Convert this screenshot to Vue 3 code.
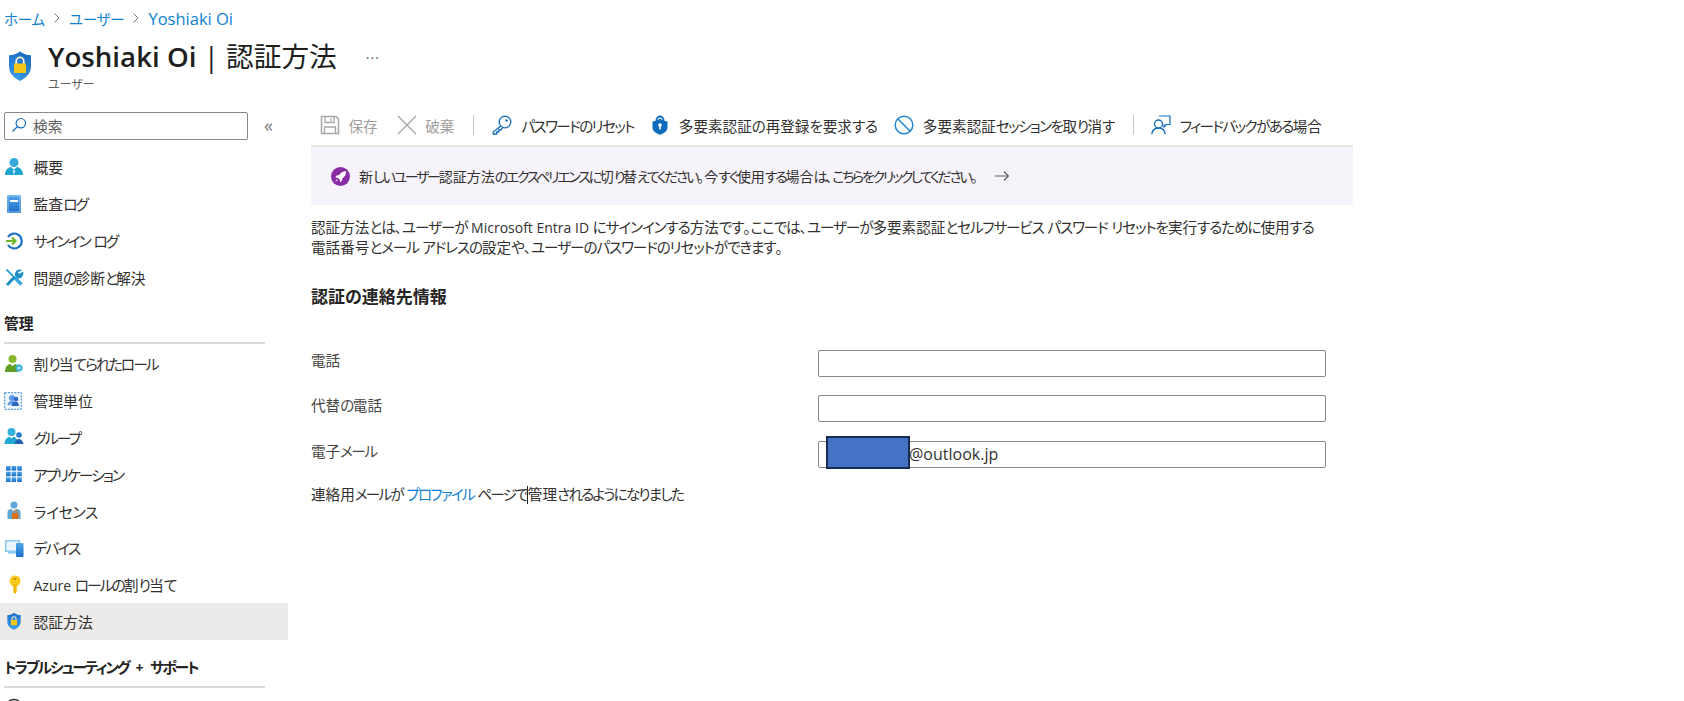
<script setup>
const runs = (text) =>
  text.match(/[\u3040-\u30ff]+|[\x00-\x7f]+|[^\u3040-\u30ff\x00-\x7f]+/g).map((t) => ({
    t,
    c: /^[\u3040-\u30ff]/.test(t) ? 'k' : /^[\x00-\x7f]/.test(t) ? 'l' : ''
  }))

const shieldBig = `<path d="M13 1.500c3 2.500 7 3.600 11 3.800v11.200c0 7.200-5.300 11.600-11 14.500C7.300 28.100 2 23.700 2 16.500V5.300c4-.2 8-1.300 11-3.800z" fill="url(#gShield)"/><path d="M13 1.500c3 2.500 7 3.600 11 3.800v11.200c0 7.200-5.300 11.600-11 14.500z" fill="#000" opacity=".08"/><path d="M9.200 14v-2.800a3.800 3.800 0 0 1 7.600 0V14" fill="none" stroke="#f3f0d8" stroke-width="1.800"/><rect x="7" y="13.500" width="12" height="9.500" rx="1" fill="#f5c518"/>`
const nav1 = [
  { label: '概要', icon: `<circle cx="10" cy="5.500" r="4.500" fill="#35a9d8"/><path d="M1 18c0-5 3-7.500 6-8l3 2.500 3-2.500c3 .5 6 3 6 8z" fill="#1ba6cf"/><path d="M10 12.500l1.200 1.500-1.200 4-1.200-4z" fill="#d8f1fa"/>` },
  { label: '監査ログ', icon: `<rect x="3" y="1" width="14" height="18" rx="1.500" fill="url(#gBlue)"/><rect x="4" y="2" width="12" height="16" rx="1" fill="none" stroke="#a9d3f3" stroke-width=".8"/><rect x="6" y="6" width="8" height="2" fill="#fff"/>` },
  { label: 'サインイン ログ', icon: `<path d="M4 6a7.500 7.500 0 1 1 0 8" fill="none" stroke="#1a6fc4" stroke-width="2.200"/><path d="M2 10h9M8 6.500l3.500 3.500L8 13.500" fill="none" stroke="#6cb52d" stroke-width="2.200"/>` },
  { label: '問題の診断と解決', icon: `<path d="M3 18L11 9.500" stroke="#1d8fc4" stroke-width="3"/><path d="M18 3a5 5 0 0 0-7 5.500l1.500 2.500a5 5 0 0 0 6.500-6.500l-3 2.300-2.300-1z" fill="#1d8fc4"/><path d="M2.500 2.500L9 9" stroke="#2ea5dc" stroke-width="1.800"/><path d="M11 11l6.500 6.500" stroke="#2ea5dc" stroke-width="3.200"/>` }
]
const nav2 = [
  { label: '割り当てられたロール', icon: `<circle cx="8.500" cy="5" r="4" fill="#86b92c"/><path d="M1 18c0-5 2.500-7.500 5-8l2.500 2 2.500-2c2.500.5 4 2 4.500 4l-2 4z" fill="#5f9e1f"/><path d="M15 10l3.500 2v4L15 18l-3.500-2v-4z" fill="#3fb4e6"/><circle cx="15" cy="14" r="1.300" fill="#d6f2fc"/>` },
  { label: '管理単位', icon: `<rect x=".700" y="1.700" width="16.600" height="16.600" fill="#eff5fc" stroke="#2f86d9" stroke-width="1" stroke-dasharray="2 1.200"/><circle cx="8" cy="7" r="3" fill="#5b9be6"/><path d="M3.500 14.500c0-3 2-4.500 4.500-4.500 1.500 0 3 .5 3.500 2z" fill="#5b9be6"/><path d="M7.500 15c0-3 2.500-4.500 4.200-4.500S15 12 15 15z" fill="#2c68c2"/><circle cx="12" cy="8" r="2.300" fill="#2c68c2"/>` },
  { label: 'グループ', icon: `<circle cx="7.500" cy="5" r="4" fill="#32b0de"/><path d="M.5 17c0-4.500 3-7 5-7.300l2 1.800 2-1.800c2 .3 4.500 2.500 4.500 7.300z" fill="#1ea8d2"/><circle cx="15" cy="8" r="2.800" fill="#2b7cd3"/><path d="M10.500 17c.2-3 2.500-5 4.500-5s4 2 4.500 5z" fill="#2063b8"/>` },
  { label: 'アプリケーション', icon: `<g fill="url(#gBlue)"><rect x="2" y="2" width="4.600" height="4.600"/><rect x="7.600" y="2" width="4.600" height="4.600"/><rect x="13.200" y="2" width="4.600" height="4.600"/><rect x="2" y="7.700" width="4.600" height="4.600"/><rect x="7.600" y="7.700" width="4.600" height="4.600"/><rect x="13.200" y="7.700" width="4.600" height="4.600"/><rect x="2" y="13.400" width="4.600" height="4.600"/><rect x="7.600" y="13.400" width="4.600" height="4.600"/><rect x="13.200" y="13.400" width="4.600" height="4.600"/></g>` },
  { label: 'ライセンス', wide: true, icon: `<circle cx="10" cy="4" r="3.500" fill="#5ea9d3"/><path d="M3.500 18v-6.500c0-2 1.500-3.500 3.500-3.500h6c2 0 3.500 1.500 3.500 3.500V18z" fill="#5ea9d3"/><path d="M8.300 8h3.400v2H8.300z" fill="#eaf4fa"/><rect x="8" y="12" width="6.500" height="6" rx="1" fill="#d9701e"/><path d="M9.500 12v-1a1.700 1.700 0 0 1 3.400 0v1" fill="none" stroke="#d9701e"/>` },
  { label: 'デバイス', icon: `<rect x="1" y="2" width="15" height="12" fill="#8fc9f2"/><rect x="2.500" y="3.500" width="12" height="9" fill="#eaf5fd"/><rect x="12" y="5" width="7.500" height="14" rx=".8" fill="url(#gBlue)"/><rect x="4" y="14" width="8" height="1.600" fill="#8fc9f2"/>` },
  { label: 'Azure ロールの割り当て', icon: `<circle cx="11" cy="6" r="5.500" fill="#f9c81e"/><path d="M9.300 9h3.400v8l-1.700 2-1.700-2z" fill="#f2b705"/><rect x="9.500" y="3.200" width="3" height="1.500" rx=".7" fill="#b88a07"/>` },
  { label: '認証方法', active: true, icon: `<path d="M12 1c2.300 1.800 5 2.700 8 2.900v8C20 16.800 16 19.800 12 21.500 8 19.800 4 16.800 4 11.900v-8C7 3.700 9.700 2.800 12 1z" fill="url(#gShield)"/><path d="M9.600 10V8.200a2.400 2.400 0 0 1 4.800 0V10" fill="none" stroke="#f3f0d8" stroke-width="1.300"/><rect x="8.300" y="9.700" width="7.400" height="6.300" rx=".7" fill="#f5c518"/>` }
]
const nav3 = [
  { label: '新しいサポート リクエスト', icon: `<circle cx="10" cy="10" r="8.500" fill="none" stroke="#323130" stroke-width="1.300"/>` }
]
const desc1 = '認証方法とは、ユーザーが Microsoft Entra ID にサインインする方法です。ここでは、ユーザーが多要素認証とセルフサービス パスワード リセットを実行するために使用する'
const desc2 = '電話番号とメール アドレスの設定や、ユーザーのパスワードのリセットができます。'
const bannerText = '新しいユーザー認証方法のエクスペリエンスに切り替えてください。今すぐ使用する場合は、こちらをクリックしてください。'
</script>

<template>
  <div class="page">
    <svg class="defs" width="0" height="0" aria-hidden="true">
      <defs>
        <linearGradient id="gShield" x1="0" y1="0" x2="0" y2="1"><stop offset="0" stop-color="#1f6fc9"/><stop offset="1" stop-color="#3aa0ee"/></linearGradient>
        <linearGradient id="gBlue" x1="0" y1="0" x2="0" y2="1"><stop offset="0" stop-color="#4fa6ec"/><stop offset="1" stop-color="#1a6ec8"/></linearGradient>
      </defs>
    </svg>

    <nav class="crumbs">
      <a><span v-for="(r, i) in runs('ホーム')" :key="i" :class="r.c">{{ r.t }}</span></a>
      <svg class="chev" viewBox="0 0 8 12"><path d="M1.500 1.500L6 6l-4.500 4.500" fill="none" stroke="#7a7a7a" stroke-width="1"/></svg>
      <a><span v-for="(r, i) in runs('ユーザー')" :key="i" :class="r.c">{{ r.t }}</span></a>
      <svg class="chev" viewBox="0 0 8 12"><path d="M1.500 1.500L6 6l-4.500 4.500" fill="none" stroke="#7a7a7a" stroke-width="1"/></svg>
      <a class="l">Yoshiaki Oi</a>
    </nav>

    <header class="head">
      <svg class="head-icon" viewBox="0 0 26 32" v-html="shieldBig"></svg>
      <div class="head-text">
        <div class="title-row">
          <h1 class="title"><b>Yoshiaki Oi</b> <i class="bar">|</i> 認証方法</h1>
          <span class="more">···</span>
        </div>
        <div class="sub">ユーザー</div>
      </div>
    </header>

    <div class="body">
      <aside class="side">
        <div class="search-row">
          <div class="search">
            <svg class="search-ic" viewBox="0 0 16 16"><circle cx="9.800" cy="6.200" r="4.700" fill="none" stroke="#0f6cbd" stroke-width="1.200"/><path d="M6.400 9.600L1.500 14.500" stroke="#0f6cbd" stroke-width="1.300"/></svg>
            <span>検索</span>
          </div>
          <span class="collapse">«</span>
        </div>
        <div v-for="n in nav1" :key="n.label" class="row">
          <svg class="row-ic" viewBox="0 0 20 20" v-html="n.icon"></svg>
          <span class="txt"><span v-for="(r, i) in runs(n.label)" :key="i" :class="r.c">{{ r.t }}</span></span>
        </div>
        <div class="sec"><span class="txt"><span v-for="(r, i) in runs('管理')" :key="i" :class="r.c">{{ r.t }}</span></span></div>
        <div v-for="n in nav2" :key="n.label" class="row" :class="{ active: n.active, wide: n.wide }">
          <svg class="row-ic" :viewBox="n.active ? '0 0 24 22' : '0 0 20 20'" v-html="n.icon"></svg>
          <span class="txt"><span v-for="(r, i) in runs(n.label)" :key="i" :class="r.c">{{ r.t }}</span></span>
        </div>
        <div class="sec"><span class="txt"><span v-for="(r, i) in runs('トラブルシューティング + サポート')" :key="i" :class="r.c">{{ r.t }}</span></span></div>
        <div v-for="n in nav3" :key="n.label" class="row">
          <svg class="row-ic" viewBox="0 0 20 20" v-html="n.icon"></svg>
          <span class="txt"><span v-for="(r, i) in runs(n.label)" :key="i" :class="r.c">{{ r.t }}</span></span>
        </div>
      </aside>

      <main class="main">
        <div class="toolbar">
          <span class="tool off">
            <svg class="tool-ic" viewBox="0 0 20 20"><path d="M1.500 1.500h14.500l2.500 2.500v14.500h-17z" fill="none" stroke="#a6a6a6" stroke-width="1.500"/><path d="M5 2v5.500h9V2M4.500 18.500V12h11v6.500M11 3.500v2.500" fill="none" stroke="#a6a6a6" stroke-width="1.300"/></svg>
            <span>保存</span>
          </span>
          <span class="tool off">
            <svg class="tool-ic" viewBox="0 0 20 20"><path d="M1 1l18 18M19 1L1 19" stroke="#a6a6a6" stroke-width="1.400"/></svg>
            <span>破棄</span>
          </span>
          <i class="sep"></i>
          <span class="tool key">
            <svg class="tool-ic" viewBox="0 0 20 20"><circle cx="13" cy="7" r="5.800" fill="none" stroke="#0f6cbd" stroke-width="1.300"/><path d="M8.800 11L1.200 17v2h3.500v-2h2v-2h2l1.800-2" fill="none" stroke="#0f6cbd" stroke-width="1.300"/><circle cx="14.500" cy="5.500" r="1.200" fill="#0f6cbd"/></svg>
            <span class="txt"><span v-for="(r, i) in runs('パスワードのリセット')" :key="i" :class="r.c">{{ r.t }}</span></span>
          </span>
          <span class="tool open">
            <svg class="tool-ic lock" viewBox="0 0 16 20"><path d="M4.500 7V5a3.500 3.500 0 0 1 7 0v2" fill="none" stroke="#0f6cbd" stroke-width="1.800"/><path d="M8 3.500c2 1.500 4.500 2.500 7.500 3v6c0 3.500-3.500 6-7.500 7.300C4 18.500.5 16 .5 12.500v-6C3.500 6 6 5 8 3.500z" fill="#0f6cbd"/><circle cx="8" cy="10" r="1.800" fill="#fff"/><path d="M7.200 11h1.600v3.500H7.200z" fill="#fff"/></svg>
            <span class="txt"><span v-for="(r, i) in runs('多要素認証の再登録を要求する')" :key="i" :class="r.c">{{ r.t }}</span></span>
          </span>
          <span class="tool">
            <svg class="tool-ic" viewBox="0 0 20 20"><circle cx="10" cy="10" r="8.800" fill="none" stroke="#1f87d0" stroke-width="1.500"/><path d="M3.800 3.800l12.400 12.400" stroke="#1f87d0" stroke-width="1.500"/></svg>
            <span class="txt"><span v-for="(r, i) in runs('多要素認証セッションを取り消す')" :key="i" :class="r.c">{{ r.t }}</span></span>
          </span>
          <i class="sep"></i>
          <span class="tool">
            <svg class="tool-ic" viewBox="0 0 20 20"><circle cx="7.500" cy="9" r="4" fill="none" stroke="#0f6cbd" stroke-width="1.300"/><path d="M.8 19.200c.4-4 3-6.200 6.700-6.200s6.300 2.200 6.700 6.200" fill="none" stroke="#0f6cbd" stroke-width="1.300"/><path d="M8 1h11v8.500h-3.500l-2.500 2.500V9.500" fill="none" stroke="#0f6cbd" stroke-width="1.200"/></svg>
            <span class="txt"><span v-for="(r, i) in runs('フィードバックがある場合')" :key="i" :class="r.c">{{ r.t }}</span></span>
          </span>
        </div>

        <div class="banner">
          <svg class="rocket" viewBox="0 0 20 20"><circle cx="10" cy="10" r="10" fill="#8a2da5"/><path d="M15.500 4.500c-3 .2-5.300 1.500-7 4l-2.500.5-1.500 2 2.500.2 2.300 2.300.2 2.500 2-1.500.5-2.500c2.500-1.700 3.800-4 4-7.500z" fill="#fff"/><path d="M6 13l-1.500 2.500L7 14z" fill="#fff"/></svg>
          <span class="txt"><span v-for="(r, i) in runs(bannerText)" :key="i" :class="r.c">{{ r.t }}</span></span>
          <svg class="arrow" viewBox="0 0 15 12"><path d="M0 6h13.500M9 1.500L13.500 6 9 10.500" fill="none" stroke="#605e5c" stroke-width="1.100"/></svg>
        </div>

        <p class="desc"><span v-for="(r, i) in runs(desc1)" :key="i" :class="r.c">{{ r.t }}</span><br><span v-for="(r, i) in runs(desc2)" :key="i" :class="r.c">{{ r.t }}</span></p>

        <h2 class="heading">認証の連絡先情報</h2>

        <div class="form">
          <label class="lbl">電話</label>
          <div class="field"></div>
          <label class="lbl"><span v-for="(r, i) in runs('代替の電話')" :key="i" :class="r.c">{{ r.t }}</span></label>
          <div class="field"></div>
          <label class="lbl"><span v-for="(r, i) in runs('電子メール')" :key="i" :class="r.c">{{ r.t }}</span></label>
          <div class="field mail"><span class="redact"></span>@outlook.jp</div>
        </div>

        <p class="foot"><span v-for="(r, i) in runs('連絡用メールが ')" :key="i" :class="r.c">{{ r.t }}</span><a class="k">プロファイル</a><span v-for="(r, i) in runs(' ページで')" :key="i" :class="r.c">{{ r.t }}</span><i class="caret"></i><span v-for="(r, i) in runs('管理されるようになりました')" :key="i" :class="r.c">{{ r.t }}</span></p>
      </main>
    </div>
  </div>
</template>

<style>
html, body { margin: 0; background: #fff; overflow: hidden; }
</style>

<style scoped>
.page {
  width: 1684px;
  height: 701px;
  overflow: hidden;
  background: #fff;
  color: #323130;
  font-family: "Open Sans", "Noto Sans CJK JP", sans-serif;
  font-size: 14.800px;
  font-feature-settings: "palt";
  --k: -2px;
}
.k { letter-spacing: var(--k); }
.l { font-size: 14px; }
.defs { display: block; }
.crumbs {
  height: 36px;
  display: flex;
  align-items: center;
  gap: 8px;
  padding-left: 4px;
  box-sizing: border-box;
  font-size: 14.500px;
  --k: -.2px;
}
.crumbs a { color: #0f7fd0; }
.crumbs a.l { font-size: 16.500px; }
.chev { width: 8px; height: 12px; }
.head {
  height: 71px;
  display: flex;
  padding-left: 7px;
  gap: 15px;
  box-sizing: border-box;
}
.head-icon { width: 26px; height: 32px; margin-top: 14px; }
.head-text { display: flex; flex-direction: column; }
.title-row { display: flex; align-items: center; height: 42px; }
.title {
  margin: -2px 0 0;
  font-size: 27.700px;
  font-weight: 400;
  color: #201f1e;
  line-height: 42px;
  white-space: nowrap;
}
.title b { font-weight: 600; }
.bar { font-style: normal; }
.more { margin-left: 29px; font-size: 14px; letter-spacing: 1px; color: #605e5c; }
.sub { font-size: 12px; color: #605e5c; line-height: 16px; margin-top: -1px; }
.body { display: grid; grid-template-columns: 288px 1fr; }
.search-row { height: 41.600px; display: flex; align-items: flex-start; }
.search {
  margin: 5px 0 0 4px;
  width: 244px;
  height: 28px;
  box-sizing: border-box;
  border: 1px solid #8a8886;
  border-radius: 2px;
  display: flex;
  align-items: center;
  gap: 6px;
  padding: 0 0 2px 6px;
  color: #605e5c;
}
.search-ic { width: 16px; height: 16px; }
.collapse { margin: 5px 0 0 16px; color: #7a7a7a; font-size: 18px; line-height: 26px; }
.row {
  height: 36.800px;
  display: flex;
  align-items: center;
  padding-left: 4px;
  gap: 9.500px;
  box-sizing: border-box;
  white-space: nowrap;
}
.row.active { background: #edebe9; }
.row.wide { --k: -.3px; }
.row-ic { width: 20px; height: 20px; flex: none; }
.sec {
  height: 48.200px;
  margin: 0 23px 1.500px 4px;
  padding-bottom: 9px;
  box-sizing: border-box;
  border-bottom: 2px solid #d9d9d9;
  display: flex;
  align-items: flex-end;
  font-weight: 700;
  color: #252423;
  white-space: nowrap;
  --k: -2px;
}
.sec .l { word-spacing: 3px; }
.main { padding-left: 23px; width: 1042px; }
.toolbar {
  height: 40px;
  box-sizing: border-box;
  border-bottom: 2px solid #e6e5e4;
  display: flex;
  align-items: center;
  gap: 19px;
  padding: 0 0 2px 9px;
  white-space: nowrap;
  font-size: 14.600px;
  --k: -1.600px;
}
.tool { display: flex; align-items: center; gap: 9px; }
.tool.off { color: #a19f9d; gap: 8.500px; }
.tool.key { margin-left: 1px; margin-right: -1px; }
.tool.open { --k: -.2px; gap: 11px; margin-right: -3px; }
.tool-ic { width: 20px; height: 20px; flex: none; }
.lock { width: 16px; }
.sep { width: 1px; height: 20px; background: #c8c6c4; margin-right: -2px; }
.banner {
  height: 58px;
  background: #f7f3fb;
  display: flex;
  align-items: center;
  padding-left: 20px;
  gap: 9px;
  color: #323130;
  white-space: nowrap;
  font-size: 14px;
  --k: -2.300px;
}
.rocket { width: 19px; height: 19px; flex: none; }
.arrow { width: 15px; height: 12px; margin-left: 8px; }
.desc { margin: 13px 0 0; line-height: 19.500px; white-space: nowrap; font-size: 14.600px; --k: -1.100px; }
.heading { margin: 28px 0 0; font-size: 17px; font-weight: 700; color: #252423; line-height: 24px; }
.form {
  margin-top: 40.500px;
  display: grid;
  grid-template-columns: 507px 508px;
  grid-auto-rows: 27px;
  row-gap: 18.500px;
  align-items: center;
}
.lbl { color: #484644; margin-bottom: 8px; font-size: 14.600px; --k: -1.500px; }
.field {
  height: 27px;
  box-sizing: border-box;
  border: 1px solid #8a8886;
  border-radius: 2px;
  position: relative;
  font-size: 16px;
  line-height: 24px;
  padding-left: 90px;
}
.redact {
  position: absolute;
  left: 7px;
  top: -6px;
  width: 84px;
  height: 33px;
  box-sizing: border-box;
  background: #4472c4;
  border: 2px solid #172c51;
}
.foot { margin: 16.500px 0 0; line-height: 20px; white-space: nowrap; font-size: 14.600px; --k: -1.800px; }
.foot a { color: #0f7fd0; }
.caret {
  display: inline-block;
  width: 1px;
  height: 18px;
  background: #201f1e;
  vertical-align: -4px;
}
</style>
